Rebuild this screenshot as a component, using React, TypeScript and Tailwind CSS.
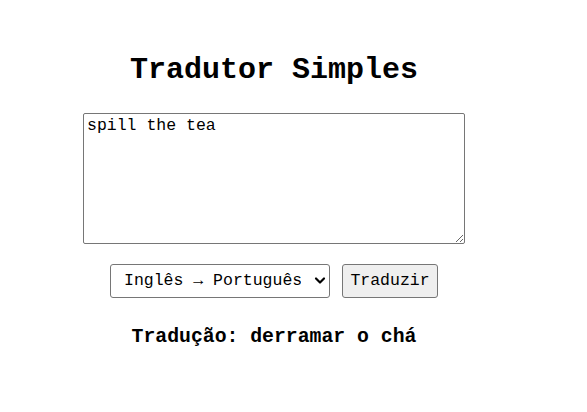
import React, { useState } from "react";

const mono = { fontFamily: '"Liberation Mono", "Courier New", monospace' };

const App: React.FC = () => {
	const [text, setText] = useState("spill the tea");
	const [dir, setDir] = useState("en-pt");

	return (
		<div
			className="w-[548px] flex flex-col items-center pt-[51px] text-black"
			style={mono}
		>
			<h1 className="text-[30px] leading-[38px] font-bold">
				Tradutor Simples
			</h1>

			{/* Input */}
			<textarea
				value={text}
				onChange={(e) => setText(e.target.value)}
				className="mt-[24px] w-[382px] h-[131px] border border-[#767676] rounded-[2px] px-[3px] py-[2px] text-[16.5px] leading-[19px] bg-white outline-none"
				style={mono}
			/>

			{/* Controls */}
			<div className="mt-[20px] flex items-center gap-[12px]">
				<div className="relative">
					<select
						value={dir}
						onChange={(e) => setDir(e.target.value)}
						className="appearance-none w-[220px] h-[34px] border border-[#767676] rounded-[3px] bg-white pl-[13px] pr-[28px] text-[16.5px] text-black outline-none"
						style={mono}
					>
						<option value="en-pt">Inglês → Português</option>
						<option value="pt-en">Português → Inglês</option>
					</select>
					<svg
						className="pointer-events-none absolute right-[4px] top-[12px]"
						width="12"
						height="10"
						viewBox="0 0 12 10"
					>
						<path
							d="M2 2.5 L6 6.5 L10 2.5"
							fill="none"
							stroke="#000"
							strokeWidth="2.2"
							strokeLinecap="round"
							strokeLinejoin="round"
						/>
					</svg>
				</div>
				<button
					className="w-[96px] h-[34px] border border-[#767676] rounded-[3px] bg-[#efefef] text-[16.5px] text-black"
					style={mono}
				>
					Traduzir
				</button>
			</div>

			{/* Result */}
			<p className="mt-[27px] text-[19.8px] leading-[24px] font-bold">
				Tradução: derramar o chá
			</p>
		</div>
	);
};

export default App;
